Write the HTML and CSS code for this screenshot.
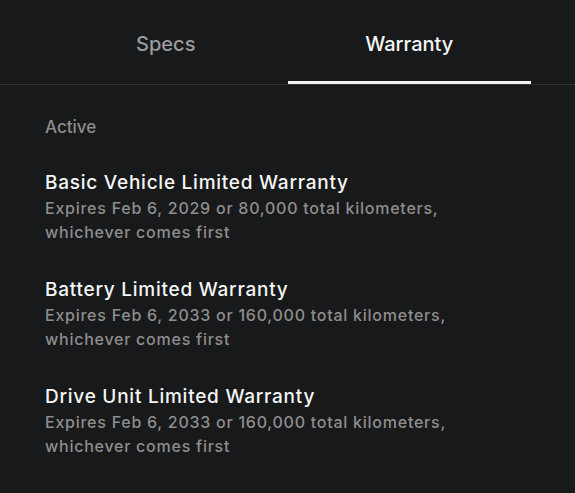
FILE: index.html
```html
<!DOCTYPE html>
<html lang="en">

<head>
    <meta charset="UTF-8">
    <meta name="viewport" content="width=device-width, initial-scale=1.0">
    <title>Warranty</title>
    <link rel="stylesheet" href="styles.css">
</head>

<body>
    <div class="tabs">
        <div class="tab">Specs</div>
        <div class="tab active">Warranty</div>
    </div>

    <div class="content">
        <div class="section-label">Active</div>

        <div class="warranty-list">
            <div class="warranty-item">
                <div class="warranty-title">Basic Vehicle Limited Warranty</div>
                <div class="warranty-desc">Expires Feb 6, 2029 or 80,000 total kilometers,<br>whichever comes first</div>
            </div>
            <div class="warranty-item">
                <div class="warranty-title">Battery Limited Warranty</div>
                <div class="warranty-desc">Expires Feb 6, 2033 or 160,000 total kilometers,<br>whichever comes first</div>
            </div>
            <div class="warranty-item">
                <div class="warranty-title">Drive Unit Limited Warranty</div>
                <div class="warranty-desc">Expires Feb 6, 2033 or 160,000 total kilometers,<br>whichever comes first</div>
            </div>
        </div>
    </div>
</body>

</html>
```

FILE: styles.css
```css
/* General Styles */
body {
    margin: 0;
    font-family: Inter, "Noto Sans", sans-serif;
    background-color: #18191b;
    color: #f2f2f2;
}

/* Tabs */
.tabs {
    display: flex;
    padding: 0 44px;
    border-bottom: 1px solid #303133;
}

.tab {
    flex: 1;
    text-align: center;
    font-size: 20px;
    font-weight: 500;
    line-height: 24px;
    padding: 32px 0 25px;
    border-bottom: 3px solid transparent;
    color: #9b9b9b;
}

.tab.active {
    color: #f5f5f5;
    border-bottom-color: #f2f2f2;
}

/* Warranty list */
.content {
    padding: 30px 45px 0;
}

.section-label {
    font-size: 17px;
    line-height: 24px;
    font-weight: 500;
    color: #8c8c8c;
    margin-bottom: 31px;
}

.warranty-list {
    display: flex;
    flex-direction: column;
    gap: 33px;
}

.warranty-title {
    font-size: 19px;
    line-height: 26px;
    font-weight: 500;
    letter-spacing: 0.75px;
    color: #f5f5f5;
}

.warranty-desc {
    font-size: 16px;
    line-height: 24px;
    font-weight: 500;
    letter-spacing: 0.75px;
    color: #8e8e8e;
}
```
